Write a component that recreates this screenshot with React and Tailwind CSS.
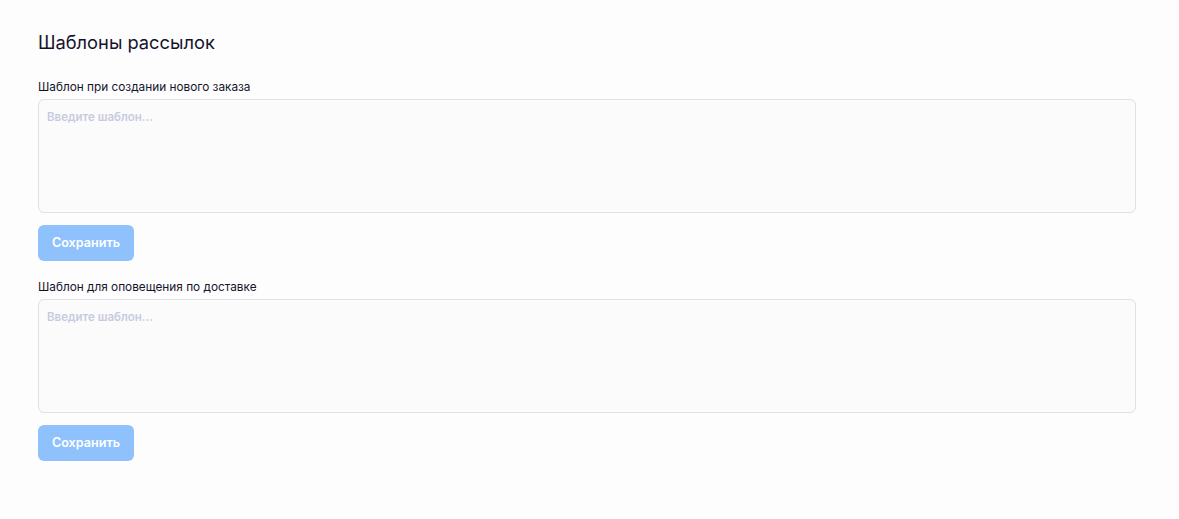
import React, { useState } from 'react';

const TemplateBlock = ({ label, value, onChange }) => (
  <div className="flex flex-col">
    <label className="text-[11.8px] font-normal text-[#14142b] leading-4 mb-1">{label}</label>
    <textarea
      value={value}
      onChange={e => onChange(e.target.value)}
      placeholder="Введите шаблон..."
      className="h-[114px] w-full resize-none rounded-md border border-[#e0e0ea] bg-[#fbfbfb] px-2 pt-[9px] pb-2 text-[11.5px] font-semibold text-[#14142b] placeholder:text-[#c8cbdf] outline-none"
    />
    <button
      disabled={!value}
      className="mt-3 h-9 w-24 rounded-md bg-[#8fc1fd] text-[12.6px] font-semibold text-white"
    >
      Сохранить
    </button>
  </div>
);

export default function App() {
  const [orderTpl, setOrderTpl] = useState('');
  const [deliveryTpl, setDeliveryTpl] = useState('');

  return (
    <div
      className="min-h-[519px] bg-[#fdfdfd] pl-[38px] pr-[43px] pt-[28px]"
      style={{ fontFamily: 'Inter, "Noto Sans", sans-serif' }}
    >
      <h1 className="text-[18.3px] leading-7 text-[#14142b] mb-[23px]">Шаблоны рассылок</h1>
      <div className="flex flex-col gap-[18px]">
        <TemplateBlock label="Шаблон при создании нового заказа" value={orderTpl} onChange={setOrderTpl} />
        <TemplateBlock label="Шаблон для оповещения по доставке" value={deliveryTpl} onChange={setDeliveryTpl} />
      </div>
    </div>
  );
}
